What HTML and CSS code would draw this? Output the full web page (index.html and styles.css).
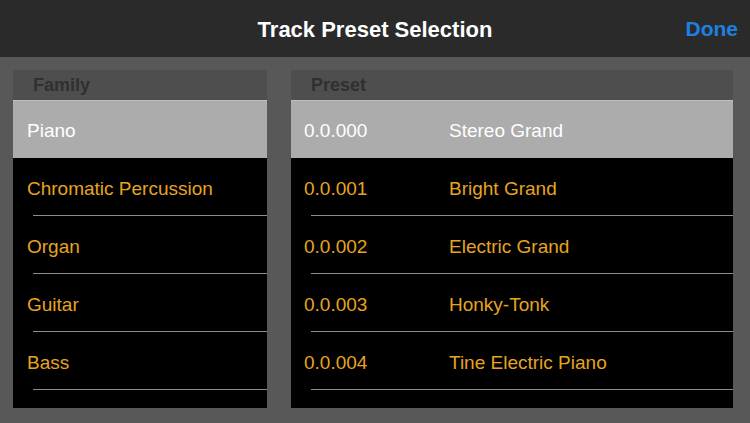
FILE: index.html
```html
<!DOCTYPE html>
<html lang="en">
<head>
	<meta charset="UTF-8">
	<title>Track Preset Selection</title>
	<link rel="stylesheet" href="styles.css">
</head>
<body>
	<div class="topbar">
		<span class="title">Track Preset Selection</span>
		<button class="done">Done</button>
	</div>

	<div class="content">
		<div class="panel family">
			<div class="panel-header">Family</div>
			<ul class="list">
				<li class="row selected"><span>Piano</span></li>
				<li class="row"><span>Chromatic Percussion</span></li>
				<li class="row"><span>Organ</span></li>
				<li class="row"><span>Guitar</span></li>
				<li class="row"><span>Bass</span></li>
			</ul>
		</div>

		<div class="panel preset">
			<div class="panel-header">Preset</div>
			<ul class="list">
				<li class="row selected"><span class="code">0.0.000</span><span>Stereo Grand</span></li>
				<li class="row"><span class="code">0.0.001</span><span>Bright Grand</span></li>
				<li class="row"><span class="code">0.0.002</span><span>Electric Grand</span></li>
				<li class="row"><span class="code">0.0.003</span><span>Honky-Tonk</span></li>
				<li class="row"><span class="code">0.0.004</span><span>Tine Electric Piano</span></li>
			</ul>
		</div>
	</div>
</body>
</html>
```

FILE: styles.css
```css
html, body {
	margin: 0;
	padding: 0;
	height: 100%;
}

body {
	background-color: #585858;
	font-family: 'Liberation Sans', Arial, sans-serif;
	display: flex;
	flex-direction: column;
	overflow: hidden;
}

.topbar {
	height: 57px;
	flex: none;
	background-color: #2a2a2a;
	display: flex;
	align-items: center;
	justify-content: center;
	position: relative;
}

.title {
	color: #fff;
	font-size: 22px;
	font-weight: bold;
	margin-top: 2px;
}

.done {
	position: absolute;
	right: 12px;
	top: 17px;
	background: transparent;
	border: none;
	padding: 0;
	color: #1d80e2;
	font-family: inherit;
	font-size: 21px;
	font-weight: bold;
}

.content {
	flex: 1;
	display: flex;
	gap: 24px;
	padding: 13px 17px 15px 13px;
	min-height: 0;
}

.panel {
	display: flex;
	flex-direction: column;
	background-color: #000;
	overflow: hidden;
}

.family {
	width: 254px;
}

.preset {
	flex: 1;
}

.panel-header {
	height: 30px;
	flex: none;
	background-color: #4e4e4e;
	color: #303030;
	font-size: 18px;
	font-weight: bold;
	display: flex;
	align-items: center;
	padding-left: 20px;
	padding-top: 1px;
	box-sizing: border-box;
}

.list {
	list-style: none;
	margin: 0;
	padding: 0;
	flex: 1;
	overflow: hidden;
}

.row {
	height: 58px;
	display: flex;
	align-items: center;
	padding-left: 14px;
	padding-top: 3px;
	box-sizing: border-box;
	color: #e6a420;
	font-size: 19px;
	position: relative;
}

.row::after {
	content: "";
	position: absolute;
	left: 20px;
	right: 0;
	bottom: 0;
	height: 1px;
	background-color: #8c8c8c;
}

.row.selected {
	background-color: #acacac;
	color: #fff;
	border-top: 1px solid #bdbdbd;
}

.row.selected::after {
	display: none;
}

.preset .row {
	padding-left: 13px;
}

.preset .code {
	width: 145px;
	flex: none;
}
```
